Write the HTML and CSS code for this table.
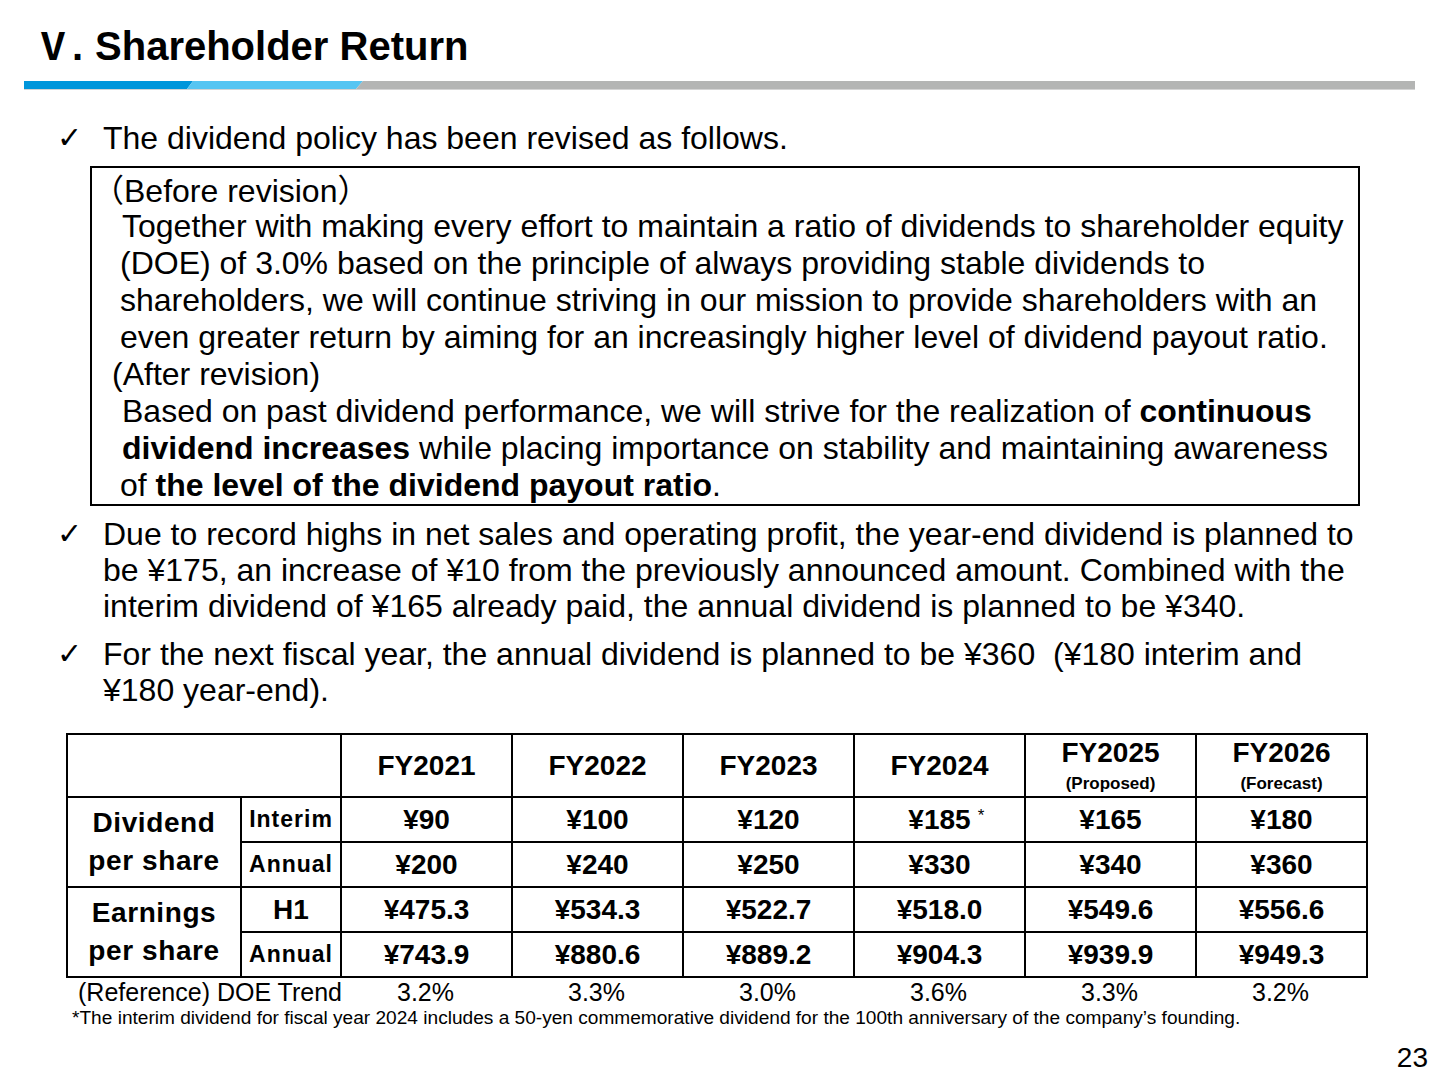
FILE: index.html
```html
<!DOCTYPE html>
<html lang="en">
<head>
<meta charset="utf-8">
<title>Shareholder Return</title>
<link rel="stylesheet" href="styles.css">
</head>
<body>
<div class="slide">
  <h1 class="title"><span class="roman">Ⅴ</span><span class="dot">.</span>Shareholder Return</h1>
  <svg class="rule" viewBox="0 0 1391 9" width="1391" height="9" aria-hidden="true">
    <polygon points="0,0 169,0 163,8 0,8" fill="#0096DB"/>
    <polygon points="169,0 339,0 332,8 163,8" fill="#56C5F2"/>
    <polygon points="339,0 1391,0 1391,8 332,8" fill="#B4B5B4"/>
    <rect x="0" y="8" width="1391" height="1" fill="#D4D4D4"/>
  </svg>

  <ul class="points first">
    <li class="point"><span class="check">✓</span><div class="txt">The dividend policy has been revised as follows.</div></li>
  </ul>

  <div class="policy">
    <span class="ln lbl-before">（Before revision）</span>
    <span class="ln body-ln in2">Together with making every effort to maintain a ratio of dividends to shareholder equity</span>
    <span class="ln body-ln">(DOE) of 3.0% based on the principle of always providing stable dividends to</span>
    <span class="ln body-ln">shareholders, we will continue striving in our mission to provide shareholders with an</span>
    <span class="ln body-ln">even greater return by aiming for an increasingly higher level of dividend payout ratio.</span>
    <span class="ln lbl-after">(After revision)</span>
    <span class="ln body-ln in2">Based on past dividend performance, we will strive for the realization of <b>continuous</b></span>
    <span class="ln body-ln in2"><b>dividend increases</b> while placing importance on stability and maintaining awareness</span>
    <span class="ln body-ln">of <b>the level of the dividend payout ratio</b>.</span>
  </div>

  <ul class="points second">
    <li class="point"><span class="check">✓</span><div class="txt">
      <span class="ln">Due to record highs in net sales and operating profit, the year-end dividend is planned to</span>
      <span class="ln">be ¥175, an increase of ¥10 from the previously announced amount. Combined with the</span>
      <span class="ln">interim dividend of ¥165 already paid, the annual dividend is planned to be ¥340.</span>
    </div></li>
    <li class="point gap"><span class="check">✓</span><div class="txt">
      <span class="ln">For the next fiscal year, the annual dividend is planned to be ¥360&nbsp; (¥180 interim and</span>
      <span class="ln">¥180 year-end).</span>
    </div></li>
  </ul>

  <table class="divtable">
    <colgroup>
      <col class="c-grp"><col class="c-sub">
      <col class="c-yr"><col class="c-yr"><col class="c-yr"><col class="c-yr"><col class="c-yr"><col class="c-yr">
    </colgroup>
    <thead>
      <tr class="hd">
        <th colspan="2"></th>
        <th>FY2021</th>
        <th>FY2022</th>
        <th>FY2023</th>
        <th>FY2024</th>
        <th><span class="yr">FY2025</span><span class="sub">(Proposed)</span></th>
        <th><span class="yr">FY2026</span><span class="sub">(Forecast)</span></th>
      </tr>
    </thead>
    <tbody>
      <tr>
        <th rowspan="2" class="grp">Dividend<br>per share</th>
        <th class="subh">Interim</th>
        <td>¥90</td><td>¥100</td><td>¥120</td>
        <td><span class="star-wrap">¥185<span class="star">*</span></span></td>
        <td>¥165</td><td>¥180</td>
      </tr>
      <tr>
        <th class="subh">Annual</th>
        <td>¥200</td><td>¥240</td><td>¥250</td><td>¥330</td><td>¥340</td><td>¥360</td>
      </tr>
      <tr>
        <th rowspan="2" class="grp">Earnings<br>per share</th>
        <th class="subh h1">H1</th>
        <td>¥475.3</td><td>¥534.3</td><td>¥522.7</td><td>¥518.0</td><td>¥549.6</td><td>¥556.6</td>
      </tr>
      <tr>
        <th class="subh">Annual</th>
        <td>¥743.9</td><td>¥880.6</td><td>¥889.2</td><td>¥904.3</td><td>¥939.9</td><td>¥949.3</td>
      </tr>
    </tbody>
  </table>

  <div class="doe">
    <span class="doe-label">(Reference) DOE Trend</span>
    <span>3.2%</span><span>3.3%</span><span>3.0%</span><span>3.6%</span><span>3.3%</span><span>3.2%</span>
  </div>
  <p class="note">*The interim dividend for fiscal year 2024 includes a 50-yen commemorative dividend for the 100th anniversary of the company’s founding.</p>
  <div class="pageno">23</div>
</div>
</body>
</html>
```
FILE: styles.css
```css
html, body {
  margin: 0;
  padding: 0;
  background: #ffffff;
}
body {
  font-family: "Liberation Sans", Arial, "Noto Sans CJK JP", sans-serif;
  color: #000000;
}
.slide {
  width: 1440px;
  height: 1080px;
  overflow: hidden;
}

/* Title */
.title {
  margin: 0;
  padding: 21px 0 0 34px;
  height: 48px;
  font-size: 40px;
  line-height: 46px;
  font-weight: bold;
  white-space: nowrap;
}
.roman {
  font-family: "Noto Sans CJK JP", sans-serif;
  font-weight: bold;
  font-size: 38px;
}
.dot {
  display: inline-block;
  width: 23px;
}
.rule {
  display: block;
  margin: 12px 0 0 24px;
}

/* Bullet points */
.points {
  list-style: none;
  margin: 0;
  padding: 0 0 0 57px;
}
.points.first {
  margin-top: 30px;
}
.points.second {
  margin-top: 10px;
}
.point {
  display: flex;
  font-size: 32px;
  line-height: 36px;
}
.point.gap {
  margin-top: 12px;
}
.check {
  flex: none;
  width: 46px;
  font-family: "DejaVu Sans", sans-serif;
  font-size: 30px;
  line-height: 36px;
}
.txt {
  white-space: nowrap;
}
.ln {
  display: block;
  white-space: nowrap;
}

/* Policy box */
.policy {
  margin: 10px 0 0 90px;
  width: 1270px;
  height: 340px;
  box-sizing: border-box;
  border: 2px solid #000;
  padding-top: 3px;
  font-size: 32px;
  line-height: 37px;
}
.policy .ln {
  height: 37px;
}
.lbl-before {
  padding-left: 0;
  padding-top: 2px;
  height: 35px !important;
}
.body-ln {
  padding-left: 28px;
}
.body-ln.in2 {
  padding-left: 30px;
}
.lbl-after {
  padding-left: 20px;
}

/* Table */
.divtable {
  margin: 25px 0 0 66px;
  width: 1300px;
  table-layout: fixed;
  border-collapse: collapse;
  font-size: 28px;
  font-weight: bold;
}
.c-grp { width: 174px; }
.c-sub { width: 100px; }
.c-yr { width: 171px; }
.divtable th,
.divtable td {
  border: 2px solid #000;
  padding: 0;
  text-align: center;
  vertical-align: middle;
  font-weight: bold;
}
.divtable tr {
  height: 45px;
}
.divtable tr.hd {
  height: 63px;
}
.hd th {
  line-height: 30px;
}
.yr {
  display: block;
  line-height: 30px;
}
.sub {
  display: block;
  margin-top: 6px;
  font-size: 17px;
  line-height: 20px;
}
.grp {
  line-height: 38px;
  letter-spacing: 0.6px;
}
.subh {
  font-size: 23px;
  letter-spacing: 1px;
}
.subh.h1 {
  font-size: 28px;
  letter-spacing: 0;
}
.star-wrap {
  position: relative;
}
.star {
  position: absolute;
  left: 100%;
  top: 3px;
  margin-left: 7px;
  font-size: 17px;
  font-weight: normal;
  line-height: 17px;
}

/* DOE row */
.doe {
  display: grid;
  grid-template-columns: 274px repeat(6, 171px);
  margin-left: 66px;
  height: 28px;
  font-size: 25px;
  line-height: 28px;
}
.doe span {
  text-align: center;
}
.doe .doe-label {
  text-align: left;
  padding-left: 12px;
  white-space: nowrap;
}
.note {
  margin: 0 0 0 72px;
  font-size: 19.1px;
  line-height: 24px;
  white-space: nowrap;
}
.pageno {
  margin-top: 11px;
  padding-right: 12px;
  text-align: right;
  font-size: 28px;
  line-height: 34px;
}
```
